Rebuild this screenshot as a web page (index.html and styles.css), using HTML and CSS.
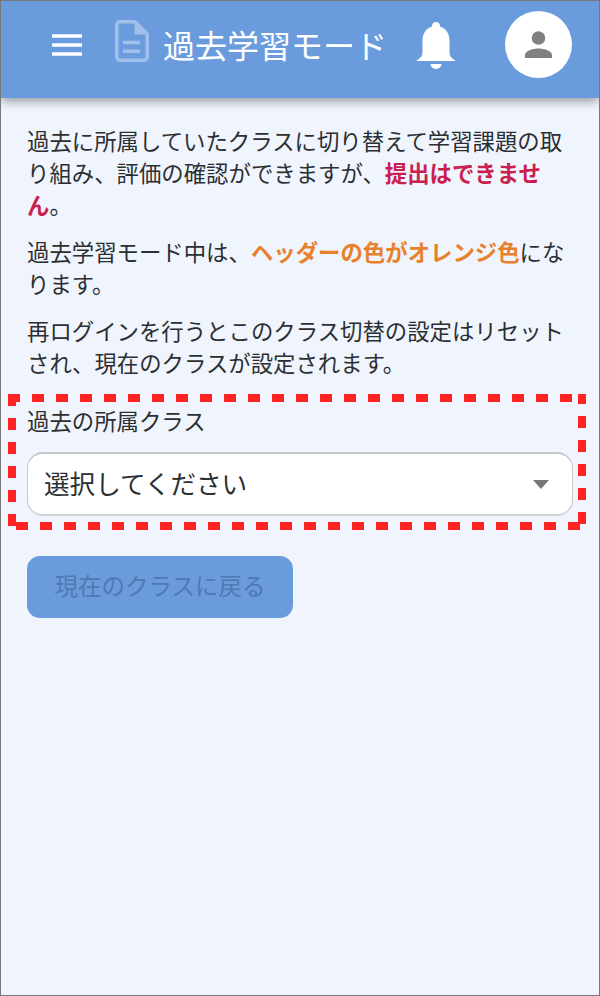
FILE: index.html
```html
<!DOCTYPE html>
<html lang="ja">
<head>
    <title>過去学習モード</title>
    <link rel="stylesheet" href="styles.css">
</head>
<body>
    <div class="navbar">
        <div class="menu-btn">
            <svg width="30" height="22" viewBox="0 0 30 22"><path d="M0 2h30M0 11h30M0 20h30" stroke="#fff" stroke-width="3.4" fill="none"/></svg>
        </div>
        <svg class="doc-icon" width="34" height="42" viewBox="0 0 34 42">
            <path d="M5 1.750h15L32.250 14V37A3.250 3.250 0 0 1 29 40.250H5A3.250 3.250 0 0 1 1.750 37V5A3.250 3.250 0 0 1 5 1.750z" fill="none" stroke="#a0c0eb" stroke-width="3.500"/>
            <path d="M19.500 2v12.500H32z" fill="#a0c0eb"/>
            <path d="M8 22.500h17M8 31.300h17" stroke="#a0c0eb" stroke-width="3.500"/>
        </svg>
        <div class="page-title">過去学習モード</div>
        <svg class="bell-icon" width="40" height="48" viewBox="0 0 40 48">
            <path d="M20 1a4 4 0 0 1 4 4.500c6.500 2 9.500 7.500 9.500 14.500v11c0 4 2 6.500 6.500 9H0c4.500-2.500 6.500-5 6.500-9V20C6.500 13 9.500 7.500 16 5.500A4 4 0 0 1 20 1z" fill="#fff"/>
            <path d="M14.500 43h11a5.500 5 0 0 1-11 0z" fill="#fff"/>
        </svg>
        <div class="avatar">
            <svg width="27" height="27" viewBox="0 0 27 27">
                <circle cx="13.500" cy="7" r="6.800" fill="#808080"/>
                <path d="M0 27v-3c0-4.500 9-6.500 13.500-6.500s13.500 2 13.500 6.500v3z" fill="#808080"/>
            </svg>
        </div>
    </div>

    <div class="content">
        <p>過去に所属していたクラスに切り替えて学習課題の取り組み、評価の確認ができますが、<span class="warn">提出はできません</span>。</p>
        <p>過去学習モード中は、<span class="notice">ヘッダーの色がオレンジ色</span>になります。</p>
        <p>再ログインを行うとこのクラス切替の設定はリセットされ、現在のクラスが設定されます。</p>

        <div class="class-select">
            <svg class="dash-box" width="578" height="136" viewBox="0 0 578 136">
                <path d="M0 4H564" class="dash-line"/>
                <path d="M574 0V130" class="dash-line dash-right"/>
                <path d="M4 0V132" class="dash-line"/>
                <path d="M8 132H572" class="dash-line"/>
            </svg>
            <label>過去の所属クラス</label>
            <div class="select-box">
                <span class="select-text">選択してください</span>
                <div class="arrow"></div>
            </div>
        </div>

        <button type="button"><span class="btn-text">現在のクラスに戻る</span></button>
    </div>
</body>
</html>
```

FILE: styles.css
```css
* {
    margin: 0;
    padding: 0;
    box-sizing: border-box;
    font-family: "Roboto", "Noto Sans CJK JP", sans-serif;
}

body {
    background: #f0f5fd;
    width: 600px;
    height: 996px;
    border: 1px solid #777;
    overflow: hidden;
}

.navbar {
    height: 97px;
    padding-left: 51px;
    padding-bottom: 10px;
    display: flex;
    align-items: center;
    background: #6a9cdd;
    box-shadow: 0 3px 10px rgba(0, 0, 0, 0.4);
}

.menu-btn {
    display: flex;
    margin-right: 33px;
}

.doc-icon {
    margin-right: 14px;
    margin-top: -7px;
}

.page-title {
    color: white;
    font-size: 32px;
    width: 253px;
    margin-top: -2px;
}

.avatar {
    width: 67px;
    height: 67px;
    margin-left: 49px;
    border-radius: 50%;
    background: white;
    display: flex;
    justify-content: center;
    align-items: center;
}

.content {
    padding: 28px 26px 0;
}

p {
    color: #2b2f33;
    font-size: 22.4px;
    line-height: 32px;
    margin-bottom: 15px;
}

.warn {
    color: #c9204f;
    font-weight: 700;
}

.notice {
    color: #e8802c;
    font-weight: 700;
}

.class-select {
    position: relative;
    margin: -1px -19px 0;
    height: 136px;
    padding: 13px 19px 0;
}

.dash-box {
    position: absolute;
    top: 0;
    left: 0;
}

.dash-line {
    fill: none;
    stroke: #ff2222;
    stroke-width: 8;
    stroke-dasharray: 12 12;
}

.dash-right {
    stroke-dashoffset: 2;
}

label {
    display: block;
    color: #2b2f33;
    font-size: 22.4px;
    line-height: 30px;
    margin-bottom: 15px;
}

.select-box {
    width: 546px;
    height: 64px;
    padding: 0 31px 0 16px;
    display: flex;
    justify-content: space-between;
    align-items: center;
    background: white;
    border: 1px solid #c6c7ca;
    border-top: 2px solid #c6c7ca;
    border-bottom: 2px solid #d2d3d6;
    border-radius: 16px;
    color: #2b2f33;
    font-size: 25.6px;
}

.select-text {
    padding-bottom: 4px;
}

.arrow {
    border-left: 8px solid transparent;
    border-right: 8px solid transparent;
    border-top: 9px solid #777;
    margin-right: -8px;
}

button {
    display: block;
    width: 266px;
    height: 62px;
    margin-top: 26px;
    background: #6a9cdd;
    color: #4e79b3;
    border: none;
    border-radius: 13px;
    font-size: 23.5px;
}

.btn-text {
    display: block;
    padding-bottom: 5px;
}
```
